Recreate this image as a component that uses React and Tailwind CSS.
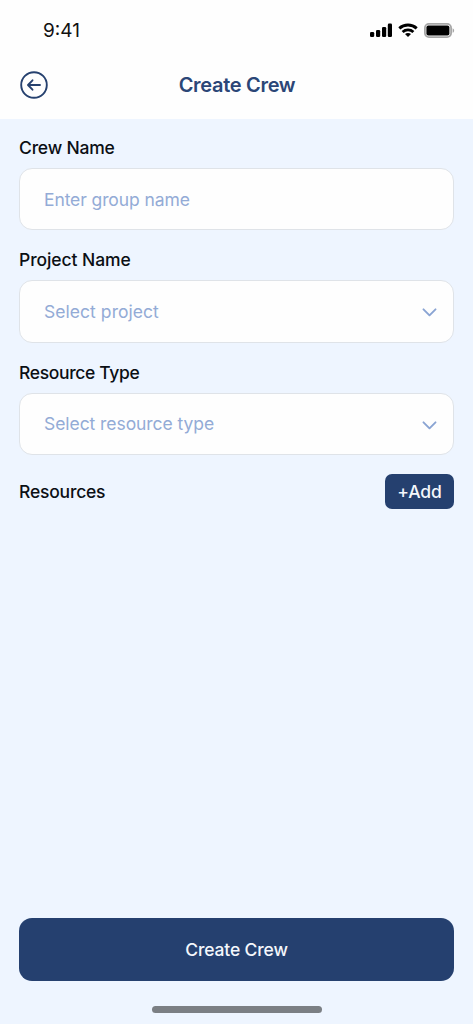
import { useState } from "react";

const selects = [
  { id: "project", label: "Project Name", placeholder: "Select project", labelTracking: "tracking-[-0.07px]", tracking: "tracking-[0.05px]" },
  { id: "type", label: "Resource Type", placeholder: "Select resource type", labelTracking: "tracking-[-0.35px]", tracking: "tracking-[-0.06px]" },
];

function StatusBar() {
  return (
    <div className="flex h-[62px] items-center justify-between pl-[43px] pr-[18px]">
      <span className="text-[19px] leading-6 text-[#111111]">9:41</span>
      <div className="flex items-center gap-[6px] pb-[2px]">
        <svg width="22" height="15" viewBox="0 0 22 15" fill="#000">
          <rect x="0" y="9" width="4.2" height="5" rx="1.3" />
          <rect x="6" y="7" width="4.2" height="7" rx="1.3" />
          <rect x="12" y="4" width="4.2" height="10" rx="1.3" />
          <rect x="17.8" y="0.6" width="4.2" height="13.4" rx="1.3" />
        </svg>
        <svg width="20" height="15" viewBox="0 0 20 15" fill="none" stroke="#000" strokeWidth="2.9">
          <path d="M1.3 5.4C6.2 0.9 13.8 0.9 18.7 5.4" />
          <path d="M4.6 9C7.7 6.2 12.3 6.2 15.4 9" />
          <path d="M10 14L7 11.1C8.7 9.7 11.3 9.7 13 11.1Z" fill="#000" stroke="none" />
        </svg>
        <svg width="31" height="15" viewBox="0 0 31 15">
          <rect x="0.9" y="0.9" width="26.2" height="13.2" rx="4" fill="none" stroke="#a6a6a6" strokeWidth="1.8" />
          <rect x="2.4" y="2.4" width="23" height="10.2" rx="2" fill="#000" />
          <path d="M28.6 5.2C30.6 6 30.6 9 28.6 9.8Z" fill="#a6a6a6" />
        </svg>
      </div>
    </div>
  );
}

function ChevronIcon() {
  return (
    <svg className="mt-[3px]" width="15" height="9" viewBox="0 0 15 9" fill="none" stroke="#8aa4d3" strokeWidth="1.9" strokeLinecap="round" strokeLinejoin="round">
      <path d="M1.5 1.3L7.5 7.3L13.5 1.3" />
    </svg>
  );
}

export default function App() {
  const [name, setName] = useState("");

  return (
    <div className="flex h-[1024px] w-[473px] flex-col overflow-hidden bg-[#eef5ff] font-['Inter',sans-serif]">
      <header className="h-[119px] bg-[#fefefe]">
        <StatusBar />
        <div className="grid h-[45px] grid-cols-[28px_1fr_28px] items-center px-5">
          <button aria-label="Back">
            <svg width="28" height="28" viewBox="0 0 28 28" fill="none" stroke="#26416f" strokeWidth="1.9" strokeLinecap="round" strokeLinejoin="round">
              <circle cx="14" cy="14" r="12.8" />
              <path d="M20 14H8.3M12.5 9.3L8 14L12.5 18.7" />
            </svg>
          </button>
          <h1 className="pl-px text-center text-[20px] font-semibold leading-6 tracking-[-0.3px] text-[#2b4677]">
            Create Crew
          </h1>
        </div>
      </header>

      <main className="flex-1 px-[19px] pt-[17px]">
        <div className="mb-[18px]">
          <label htmlFor="crew" className="block h-8 text-[17.5px] font-medium leading-6 tracking-[-0.2px] text-[#0b0f14]">
            Crew Name
          </label>
          <input
            id="crew"
            value={name}
            onChange={(e) => setName(e.target.value)}
            placeholder="Enter group name"
            className="block h-[62.4px] w-full rounded-[13px] border border-[#dfe3e8] bg-[#fefefe] px-6 text-[17.5px] tracking-[-0.1px] text-[#0b0f14] placeholder:text-[#93abd6] outline-none"
          />
        </div>

        {selects.map((field) => (
          <div key={field.id} className="mb-[18px]">
            <span className={`block h-8 text-[17.5px] font-medium leading-6 text-[#0b0f14] ${field.labelTracking}`}>
              {field.label}
            </span>
            <button className="flex h-[62.2px] w-full items-center justify-between rounded-[13px] border border-[#dfe3e8] bg-[#fefefe] pl-6 pr-4">
              <span className={`pt-px text-[17.5px] text-[#93abd6] ${field.tracking}`}>{field.placeholder}</span>
              <ChevronIcon />
            </button>
          </div>
        ))}

        <div className="mt-[19.4px] flex items-center justify-between">
          <span className="text-[17.5px] font-medium leading-6 tracking-[-0.2px] text-[#0b0f14]">Resources</span>
          <button className="h-[35px] w-[69px] rounded-[7px] bg-[#25406f] text-[17.5px] font-medium tracking-[-0.15px] text-[#f4f7fc]">
            +Add
          </button>
        </div>
      </main>

      <footer className="px-[19px]">
        <button className="h-[63px] w-full rounded-[13px] bg-[#25406f] pt-[2px] text-[17.5px] font-medium tracking-[-0.15px] text-[#f4f7fc]">
          Create Crew
        </button>
        <div className="mx-auto mb-[11px] mt-[25px] h-[7px] w-[170px] rounded-full bg-[#7b7f84]" />
      </footer>
    </div>
  );
}
